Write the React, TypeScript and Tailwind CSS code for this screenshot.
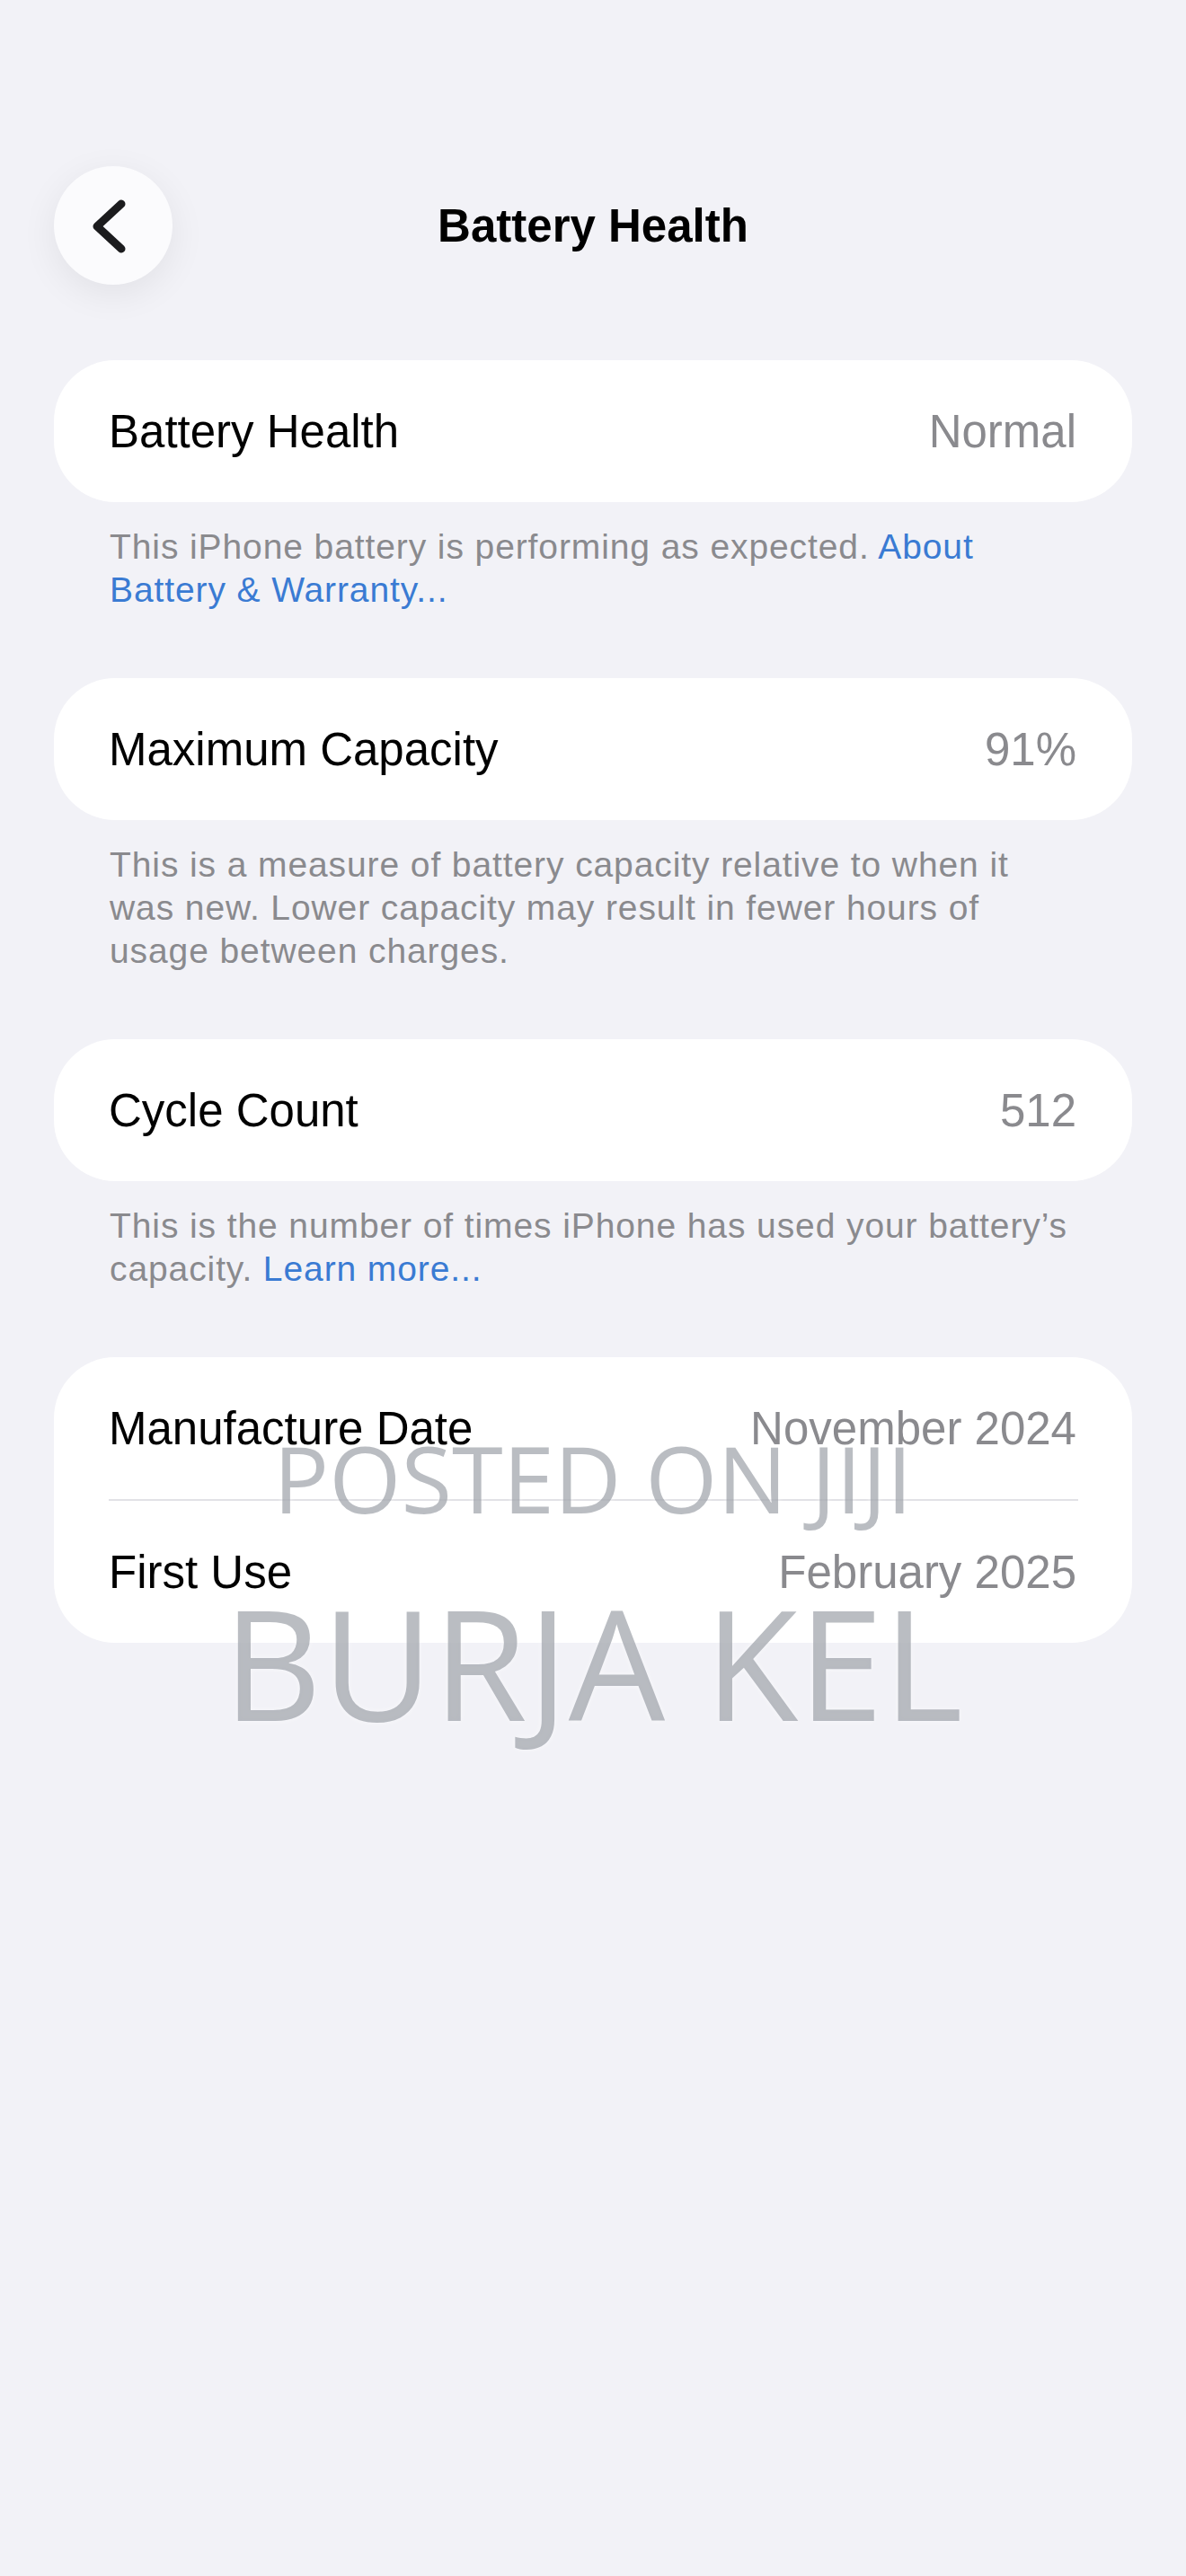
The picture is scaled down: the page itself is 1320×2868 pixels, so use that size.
import React from "react";

const font = { fontFamily: '"Liberation Sans", Arial, sans-serif' };

type RowProps = { label: string; value: string };

const Row = ({ label, value }: RowProps) => (
  <div className="flex h-[158px] items-center justify-between pl-[61px] pr-[62px]">
    <span className="text-[51px] leading-none text-black">{label}</span>
    <span className="text-[51px] leading-none text-[#8a8a8e]">{value}</span>
  </div>
);

const Card = ({ children }: { children: React.ReactNode }) => (
  <div className="rounded-[68px] bg-white">{children}</div>
);

const Footnote = ({ children }: { children: React.ReactNode }) => (
  <p className="mt-[26px] px-[62px] text-[39px] leading-[48px] tracking-[0.9px] text-[#8a8a8e]">
    {children}
  </p>
);

const Link = ({ children }: { children: React.ReactNode }) => (
  <span className="text-[#3a7bd3]">{children}</span>
);

const BackButton = () => (
  <button className="flex h-[132px] w-[132px] items-center justify-center rounded-full bg-[#fbfbfd] shadow-[0_10px_40px_rgba(0,0,0,0.07)]">
    <svg width="132" height="132" viewBox="0 0 132 132" fill="none">
      <path
        d="M75 42 L48 67 L75 92"
        stroke="#1c1c1e"
        strokeWidth="9"
        strokeLinecap="round"
        strokeLinejoin="round"
      />
    </svg>
  </button>
);

export default function App() {
  return (
    <div
      className="relative min-h-[2868px] w-full overflow-hidden bg-[#f2f2f7]"
      style={font}
    >
      <div className="px-[60px] pt-[185px]">
        {/* header */}
        <div className="grid grid-cols-[132px_1fr_132px] items-center">
          <BackButton />
          <h1 className="text-center text-[51px] font-bold leading-none text-black">
            Battery Health
          </h1>
          <div />
        </div>

        <div className="mt-[84px]">
          <Card>
            <Row label="Battery Health" value="Normal" />
          </Card>
          <Footnote>
            This iPhone battery is performing as expected. <Link>About</Link>
            <br />
            <Link>Battery &amp; Warranty...</Link>
          </Footnote>
        </div>

        <div className="mt-[74px]">
          <Card>
            <Row label="Maximum Capacity" value="91%" />
          </Card>
          <Footnote>
            This is a measure of battery capacity relative to when it
            <br />
            was new. Lower capacity may result in fewer hours of
            <br />
            usage between charges.
          </Footnote>
        </div>

        <div className="mt-[74px]">
          <Card>
            <Row label="Cycle Count" value="512" />
          </Card>
          <Footnote>
            This is the number of times iPhone has used your battery’s
            <br />
            capacity. <Link>Learn more...</Link>
          </Footnote>
        </div>

        <div className="mt-[74px]">
          <Card>
            <Row label="Manufacture Date" value="November 2024" />
            <div className="ml-[61px] mr-[60px] h-[2px] bg-[#e2e2e6]" />
            <Row label="First Use" value="February 2025" />
          </Card>
        </div>
      </div>

      {/* watermark */}
      <div
        className="pointer-events-none absolute inset-x-0 top-[1594px] flex flex-col items-center text-[rgba(136,142,150,0.58)] [text-shadow:0_0_6px_rgba(255,255,255,0.6)]"
        style={{ fontFamily: '"Open Sans", "Noto Sans", sans-serif' }}
      >
        <div className="text-[103px] leading-none">POSTED ON JIJI</div>
        <div className="mt-[68px] text-[170px] leading-none">BURJA KEL</div>
      </div>
    </div>
  );
}
